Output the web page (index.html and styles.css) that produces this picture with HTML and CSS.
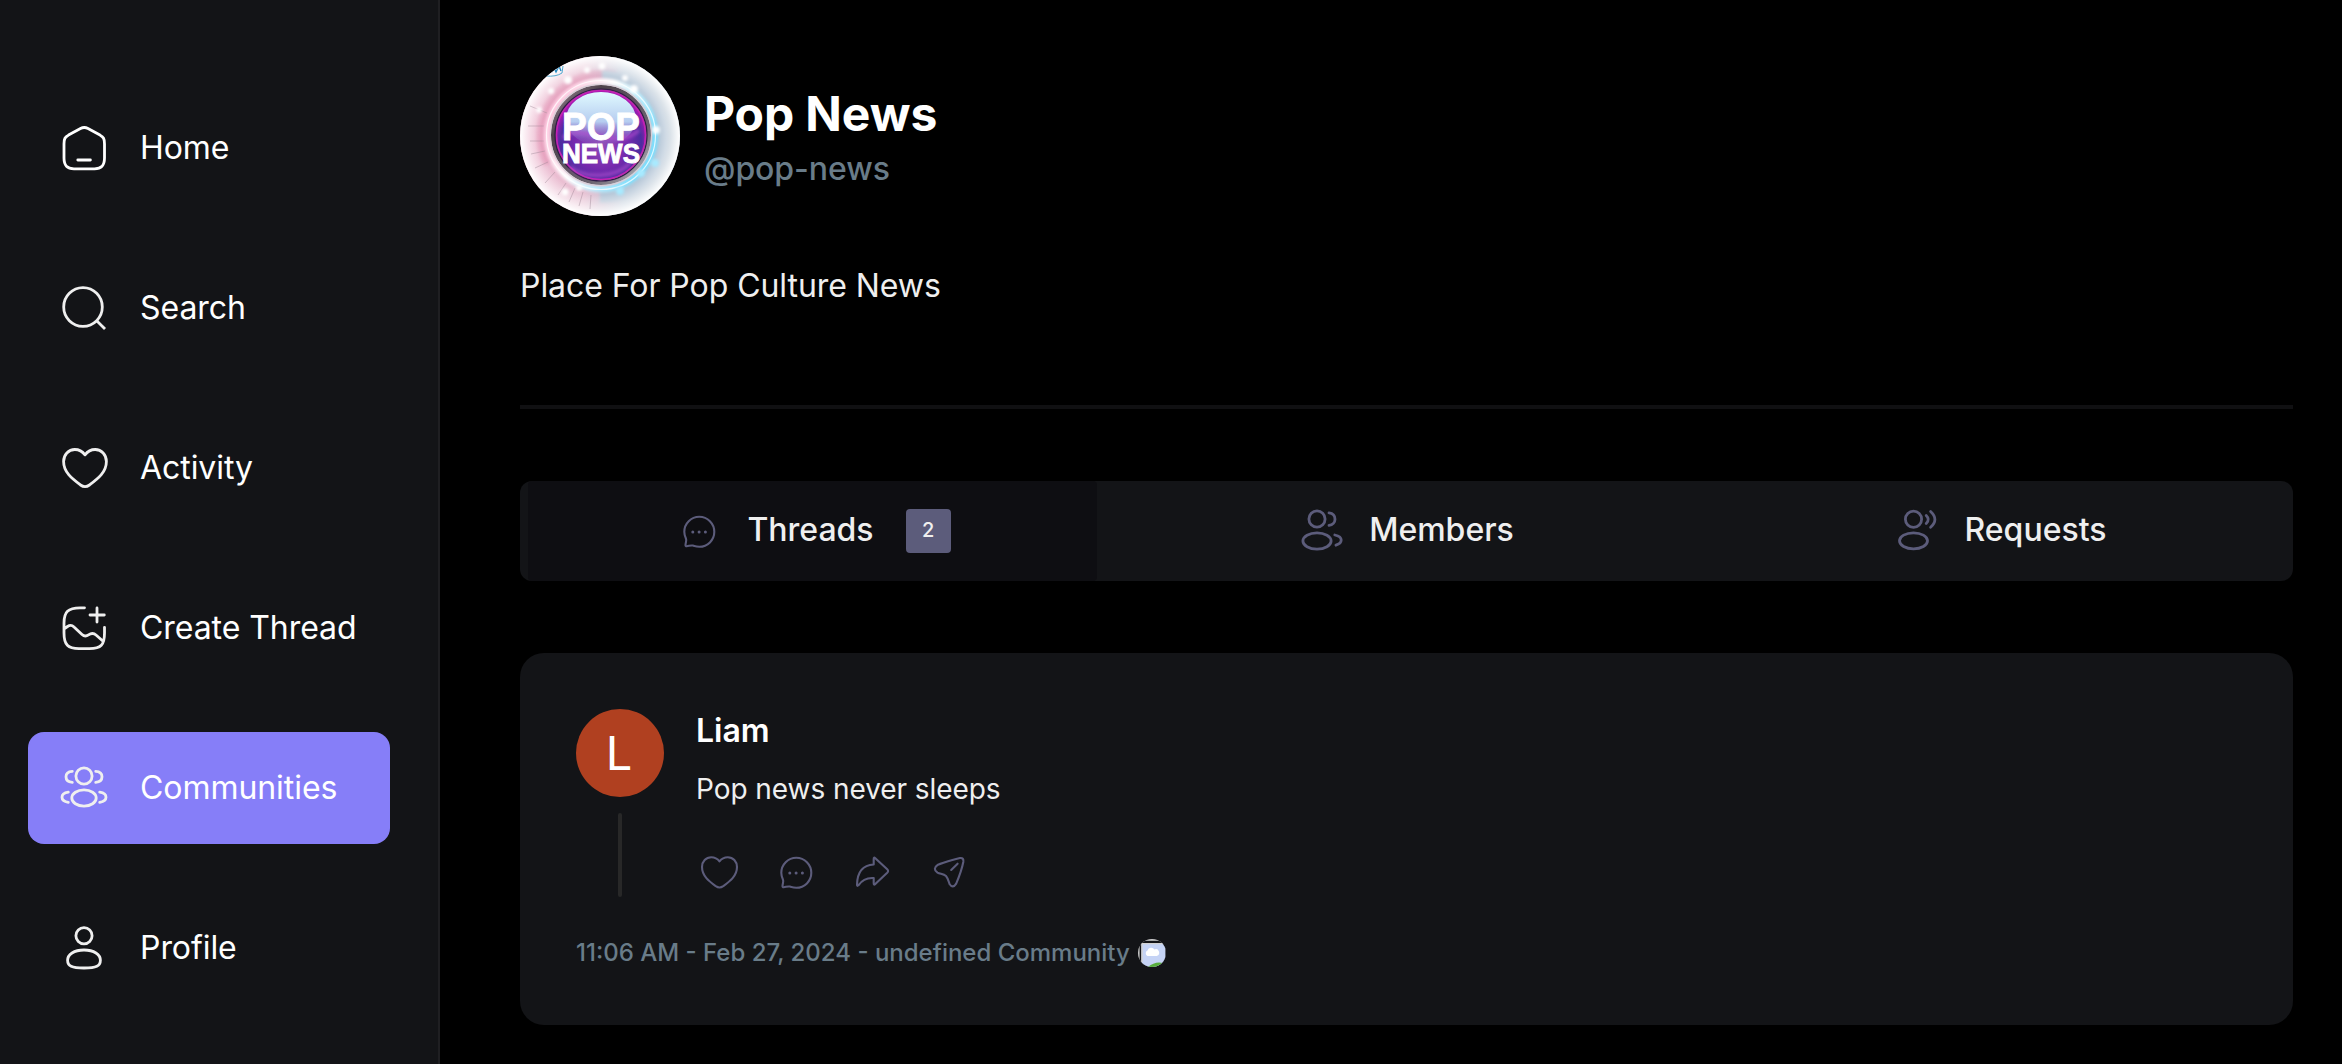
FILE: index.html
```html
<!DOCTYPE html>
<html lang="en">
<head>
<meta charset="utf-8">
<title>Pop News</title>
<link rel="stylesheet" href="styles.css">
</head>
<body>
<svg class="defs" aria-hidden="true">
  <symbol id="chat" viewBox="0 0 48 48">
    <path d="M24.3 9.8A15 15 0 1 1 24.3 39.8C21.8 39.8 20 39.2 18 38.6C16 38 14 39 11.8 39.2Q10.4 39.3 10.5 38C10.6 35.5 11.8 33.5 11 31.8C9.9 29.5 9.3 27.3 9.3 24.8A15 15 0 0 1 24.3 9.8Z"/>
    <path class="dots" d="M17.8 25h.01M24.1 25h.01M30.4 25h.01"/>
  </symbol>
</svg>
<div class="app">
  <nav class="sidebar">
    <a class="nav-item"><svg class="icon bright" viewBox="0 0 48 48"><path d="M4 20C4 14.5 5 13.2 8.5 11.1L20.5 4.5Q24.2 2.5 28 4.5L40 11.1C43.5 13.2 44.5 14.5 44.5 20V34C44.5 41.5 41.5 44.8 34.5 44.8H14C7 44.8 4 41.5 4 34ZM17.8 36H30.4"/></svg>Home</a>
    <a class="nav-item"><svg class="icon butt" viewBox="0 0 48 48"><circle cx="23" cy="23" r="19.3"/><path d="M36.7 36.7L45 45"/></svg>Search</a>
    <a class="nav-item"><svg class="icon" viewBox="0 0 48 48"><path d="M25 10.8C22.5 7.5 18.5 5.5 14.8 5.5C8.5 5.5 3.6 10.8 3.6 17.5C3.6 28.5 12.5 35 20.5 41Q25 44.2 29.5 41C37.5 35 46.4 28.5 46.4 17.5C46.4 10.8 41.5 5.5 35.2 5.5C31.5 5.5 27.5 7.5 25 10.8Z"/></svg>Activity</a>
    <a class="nav-item"><svg class="icon" viewBox="0 0 48 48"><path d="M24.5 3.8H20C8 3.8 4 8 4 19V29C4 41 8 44.6 19 44.6H29.5C41 44.6 44.5 41 44.5 29V23.3M37 4V18M30 11H44.3M4.3 24.8L7.5 22.5C9.8 20.9 12 21 14 23L22 30.5C24 32.3 26.5 32.3 28.5 30.9C31 29.2 34 29.2 36.3 31.2L42.8 37"/></svg>Create Thread</a>
    <a class="nav-item active"><svg class="icon" viewBox="0 0 48 48"><circle cx="24" cy="12" r="8.1"/><ellipse cx="24" cy="34" rx="12.2" ry="8.1"/><path d="M12.3 7.3C8.5 7.5 6 9.6 6 12.7S8.5 18 12.3 18.3M35.7 7.3C39.5 7.5 42 9.6 42 12.7S39.5 18 35.7 18.3M8.3 28.2C4.5 28.8 2 30.8 2 33.2S4.5 37.6 8.3 38.4M39.7 28.2C43.5 28.8 46 30.8 46 33.2S43.5 37.6 39.7 38.4"/></svg>Communities</a>
    <a class="nav-item"><svg class="icon" viewBox="0 0 48 48"><circle cx="24" cy="11.7" r="8.1"/><path d="M24 26C34 26 40.4 30.5 40.4 36.3C40.4 42 36.5 44 24 44S7.6 42 7.6 36.3C7.6 30.5 14 26 24 26Z"/></svg>Profile</a>
  </nav>
  <main class="main">
    <header class="profile">
      <svg class="logo" viewBox="0 0 160 160">
        <defs>
          <linearGradient id="halo"><stop offset="0" stop-color="#eeb4cd"/><stop offset=".4" stop-color="#e8c3d4"/><stop offset=".65" stop-color="#bfccda"/><stop offset="1" stop-color="#aebfcd"/></linearGradient>
          <radialGradient id="edge"><stop offset=".72" stop-color="#fff" stop-opacity="0"/><stop offset=".96" stop-color="#fff" stop-opacity=".95"/></radialGradient>
          <linearGradient id="rim" x2="1" y2="1"><stop offset="0" stop-color="#a08f9c"/><stop offset=".25" stop-color="#4d424b"/><stop offset=".7" stop-color="#6b6470"/><stop offset="1" stop-color="#c4c6cb"/></linearGradient>
          <linearGradient id="glow" x2="1" y2=".5"><stop offset="0" stop-color="#ffb5d5"/><stop offset=".5" stop-color="#fff"/><stop offset="1" stop-color="#79dfff"/></linearGradient>
          <radialGradient id="ball" cy=".58"><stop offset="0" stop-color="#9450b8"/><stop offset=".55" stop-color="#7729ae"/><stop offset=".85" stop-color="#4b2d9f"/><stop offset="1" stop-color="#a01bb2"/></radialGradient>
          <linearGradient id="shine" x2="0" y2="1"><stop offset="0" stop-color="#e1faff"/><stop offset=".55" stop-color="#b6cdf0"/><stop offset="1" stop-color="#8060c4" stop-opacity="0"/></linearGradient>
          <filter id="soft" x="-20%" y="-20%" width="140%" height="140%"><feGaussianBlur stdDeviation="1.6"/></filter>
          <clipPath id="round"><circle cx="80" cy="80" r="80"/></clipPath>
        </defs>
        <g clip-path="url(#round)">
          <rect width="160" height="160" fill="url(#halo)"/>
          <path d="M28 108A61 61 0 0 1 95 20" fill="none" stroke="#df83a8" stroke-opacity=".4" stroke-width="10" filter="url(#soft)"/>
          <path d="M82 20A60 60 0 0 1 142 80A60 60 0 0 1 80 141" fill="none" stroke="#b9c9d9" stroke-width="12" filter="url(#soft)"/>
          <circle cx="80" cy="80" r="82" fill="url(#edge)"/>
          <path d="M10 50L27 57M8 70H24M10 85H24M11 98L25 95M15 112L28 106M25 127L35 116M38 139L46 127M49 146L55 132M59 150L63 136M70 153L71 139" stroke="#9d8795" stroke-opacity=".55" stroke-width=".8"/>
          <path d="M26 20Q36 21 42 17L43 10" fill="none" stroke="#51a8cf" stroke-width="1"/>
          <path d="M32 16L34 12L36 16L39 10L41 15" fill="none" stroke="#2388c0" stroke-width="1.4"/>
          <circle cx="81" cy="79" r="54" fill="none" stroke="url(#glow)" stroke-width="6" filter="url(#soft)"/>
          <circle cx="81" cy="79" r="54.5" fill="none" stroke="#fff" stroke-opacity=".75" stroke-width="1.2"/>
          <g fill="#fff" filter="url(#soft)"><circle cx="114" cy="33" r="4"/><circle cx="105" cy="22" r="3"/><circle cx="82" cy="10" r="3.4"/><circle cx="67" cy="14" r="3"/><circle cx="48" cy="24" r="4"/><circle cx="31" cy="35" r="3"/><circle cx="19" cy="54" r="3"/><circle cx="45" cy="136" r="3.5"/><circle cx="59" cy="132" r="3"/><circle cx="136" cy="74" r="4"/></g>
          <g fill="#a8eaff" filter="url(#soft)"><circle cx="135" cy="107" r="4"/><circle cx="121" cy="117" r="4"/><circle cx="100" cy="135" r="4"/></g>
          <circle cx="81" cy="79" r="47.5" fill="url(#ball)" stroke="url(#rim)" stroke-width="5"/>
          <circle cx="81" cy="79" r="50.6" fill="none" stroke="#d9cfd8" stroke-width="1.2"/>
          <circle cx="81" cy="79" r="46" fill="none" stroke="#301a48" stroke-width="1.2"/>
          <circle cx="81" cy="79" r="44.5" fill="none" stroke="#c222b4" stroke-width="1.5"/>
          <ellipse cx="81" cy="63" rx="35" ry="27" fill="url(#shine)"/>
          <path d="M43 82C60 65 96 97 119 74M50 111C66 124 98 121 110 107" fill="none" stroke="#b34bd0" stroke-opacity=".6" stroke-width="4" filter="url(#soft)"/>
          <g class="logo-text"><text x="42" y="83.7" font-size="39" textLength="78" lengthAdjust="spacingAndGlyphs">POP</text><text x="42" y="106.6" font-size="27.5" textLength="78" lengthAdjust="spacingAndGlyphs">NEWS</text></g>
        </g>
      </svg>
      <div>
        <h1 class="name">Pop News</h1>
        <p class="handle">@pop-news</p>
      </div>
    </header>
    <p class="bio">Place For Pop Culture News</p>
    <div class="rule"></div>
    <div class="tabs">
      <div class="tab selected"><svg class="icon muted thin"><use href="#chat"/></svg><span>Threads</span><span class="count">2</span></div>
      <div class="tab"><svg class="icon muted" viewBox="0 0 48 48"><circle cx="20" cy="12" r="8.1"/><ellipse cx="20" cy="34" rx="14.1" ry="8.1"/><path d="M32 5.9C35.7 6.4 38 9 38 12.2S35.7 18 32 18.4M37.8 28C41.8 28.8 44.2 30.8 44.2 33.1S42.2 37.2 38.9 38.2"/></svg><span>Members</span></div>
      <div class="tab"><svg class="icon muted" viewBox="0 0 48 48"><circle cx="20.5" cy="12.2" r="8.1"/><ellipse cx="20.5" cy="33.8" rx="14" ry="8"/><path d="M33.2 8.6Q37.2 12.6 33.2 16.6M37.6 4.5Q46.2 12.5 37.6 20.3"/></svg><span>Requests</span></div>
    </div>
    <article class="card">
      <div class="post">
        <div class="rail"><div class="avatar">L</div><div class="line"></div></div>
        <div class="body">
          <h2 class="author">Liam</h2>
          <p class="message">Pop news never sleeps</p>
          <div class="actions">
            <svg class="icon muted thin" viewBox="0 0 48 48"><path d="M23.5 13.3C21.5 10.7 18.2 9.2 15.2 9.2C10 9.2 6 13.5 6 19C6 28 13.2 33.3 19.8 38.2Q23.5 40.8 27.2 38.2C33.8 33.3 41 28 41 19C41 13.5 37 9.2 31.8 9.2C28.8 9.2 25.5 10.7 23.5 13.3Z"/></svg>
            <svg class="icon muted thin"><use href="#chat"/></svg>
            <svg class="icon muted thin" viewBox="0 0 48 48"><path d="M25.7 16.5V11Q25.7 8.8 27.3 10.2L39.2 21.3Q41 23 39.2 24.8L27.3 36Q25.7 37.5 25.7 35.3V30C19 29.5 14 32 10.4 37.3Q9 38.6 9 36.8C9.3 24 15 17 25.7 16.5Z"/></svg>
            <svg class="icon muted thin" viewBox="0 0 48 48"><path d="M14 16.7C20 14.8 29 11.3 36 10Q40 9.5 39.3 14C37.8 21.5 35 29 32.2 35.6Q28.8 41 25.5 36C24.6 33 24 30.2 22 28C19.5 25.8 16 26 13.5 24.6Q8 20.8 14 16.7ZM27.2 22L33.6 15.7"/></svg>
          </div>
        </div>
      </div>
      <div class="meta">11:06 AM - Feb 27, 2024 - undefined Community
        <svg class="missing" viewBox="0 0 28 28"><defs><clipPath id="dot"><circle cx="14" cy="14" r="14"/></clipPath></defs><g clip-path="url(#dot)"><rect width="28" height="28" fill="#c8c8c8"/><rect x="1.6" y="1.8" width="26.4" height="28" fill="#131418"/><rect x="3.4" y="4" width="24" height="24" fill="#c5d3f5"/><path d="M9.5 17a3.1 3.1 0 0 1 0-5.6 4 4 0 0 1 7-1 3.4 3.4 0 0 1 2.3 6.6Z" fill="#fff"/><path d="M10 28Q17 22 25 24V28Z" fill="#58ad3d"/><path d="M3 4.6H25M4 4V23" stroke="#d2d2d2" stroke-width="1.4"/></g></svg>
      </div>
    </article>
  </main>
</div>
</body>
</html>
```
FILE: styles.css
```css
* { box-sizing: border-box; margin: 0; padding: 0; }
body { background: #000; color: #fff; font-family: Inter, "Liberation Sans", sans-serif; overflow: hidden; }
.defs { display: none; }
.app { display: flex; height: 1064px; }
.sidebar { width: 440px; flex: none; display: flex; flex-direction: column; gap: 48px; padding: 92px 48px 0 28px; background: #131417; border-right: 2px solid #1f1f22; }
.nav-item { display: flex; align-items: center; gap: 32px; height: 112px; padding: 0 32px; border-radius: 16px; font-size: 32px; line-height: 48px; letter-spacing: -.06px; white-space: nowrap; }
.nav-item.active { background: #867ef8; }
.icon { display: block; width: 48px; height: 48px; flex: none; fill: none; stroke: #efefef; stroke-width: 2.8; stroke-linecap: round; stroke-linejoin: round; }
.bright { stroke: #fff; }
.butt { stroke-linecap: butt; }
.muted { stroke: #5c5c7b; }
.thin { stroke-width: 2.1; }
.dots { stroke-width: 3; }
.main { flex: 1; padding: 56px 49px 0 80px; }
.profile { display: flex; align-items: center; gap: 24px; }
.logo { display: block; width: 160px; height: 160px; }
.logo-text { fill: #fff; font-family: "Liberation Sans", sans-serif; font-weight: 700; stroke: #fff; stroke-width: .9; }
.name { font-size: 48px; line-height: 66px; font-weight: 700; letter-spacing: -.1px; }
.handle { color: #697c89; font-size: 32px; line-height: 44px; font-weight: 500; letter-spacing: -.06px; }
.bio { margin-top: 48px; color: #efefef; font-size: 32px; line-height: 44px; letter-spacing: -.06px; }
.rule { height: 4px; margin-top: 97px; background: #101012; }
.tabs { display: grid; grid-template-columns: 569fr 616fr 572fr; height: 100px; margin-top: 72px; padding: 0 8px; border-radius: 12px; background: #131417; color: #efefef; }
.tab { display: flex; align-items: center; justify-content: center; gap: 24px; border-radius: 4px; font-size: 32px; line-height: 44px; font-weight: 500; padding-left: 1px; }
.tab > span { margin-bottom: 2px; }
.selected { background: #0e0e12; }
.tab > .count { width: 45px; height: 44px; margin: 0 0 0 8px; border-radius: 4px; background: #5c5c7b; font-size: 20px; line-height: 43px; text-align: center; }
.card { height: 372px; margin-top: 72px; padding: 56px; border-radius: 24px; background: #131417; }
.post { display: flex; gap: 32px; height: 188px; }
.rail { display: flex; flex-direction: column; align-items: center; width: 88px; }
.avatar { width: 88px; height: 88px; padding-right: 2px; border-radius: 50%; background: #b04020; font-size: 47px; line-height: 88px; text-align: center; }
.line { flex: 1; width: 4px; margin-top: 16px; border-radius: 4px; background: #282828; }
.author { font-size: 32px; line-height: 44px; font-weight: 600; }
.message { margin-top: 16px; color: #efefef; font-size: 28px; line-height: 40px; letter-spacing: -.06px; }
.actions { display: flex; gap: 28px; margin-top: 39px; }
.meta { display: flex; align-items: center; gap: 8px; height: 28px; margin-top: 42px; color: #697c89; font-size: 24px; line-height: 28px; font-weight: 500; }
.missing { display: block; width: 28px; height: 28px; }
```
